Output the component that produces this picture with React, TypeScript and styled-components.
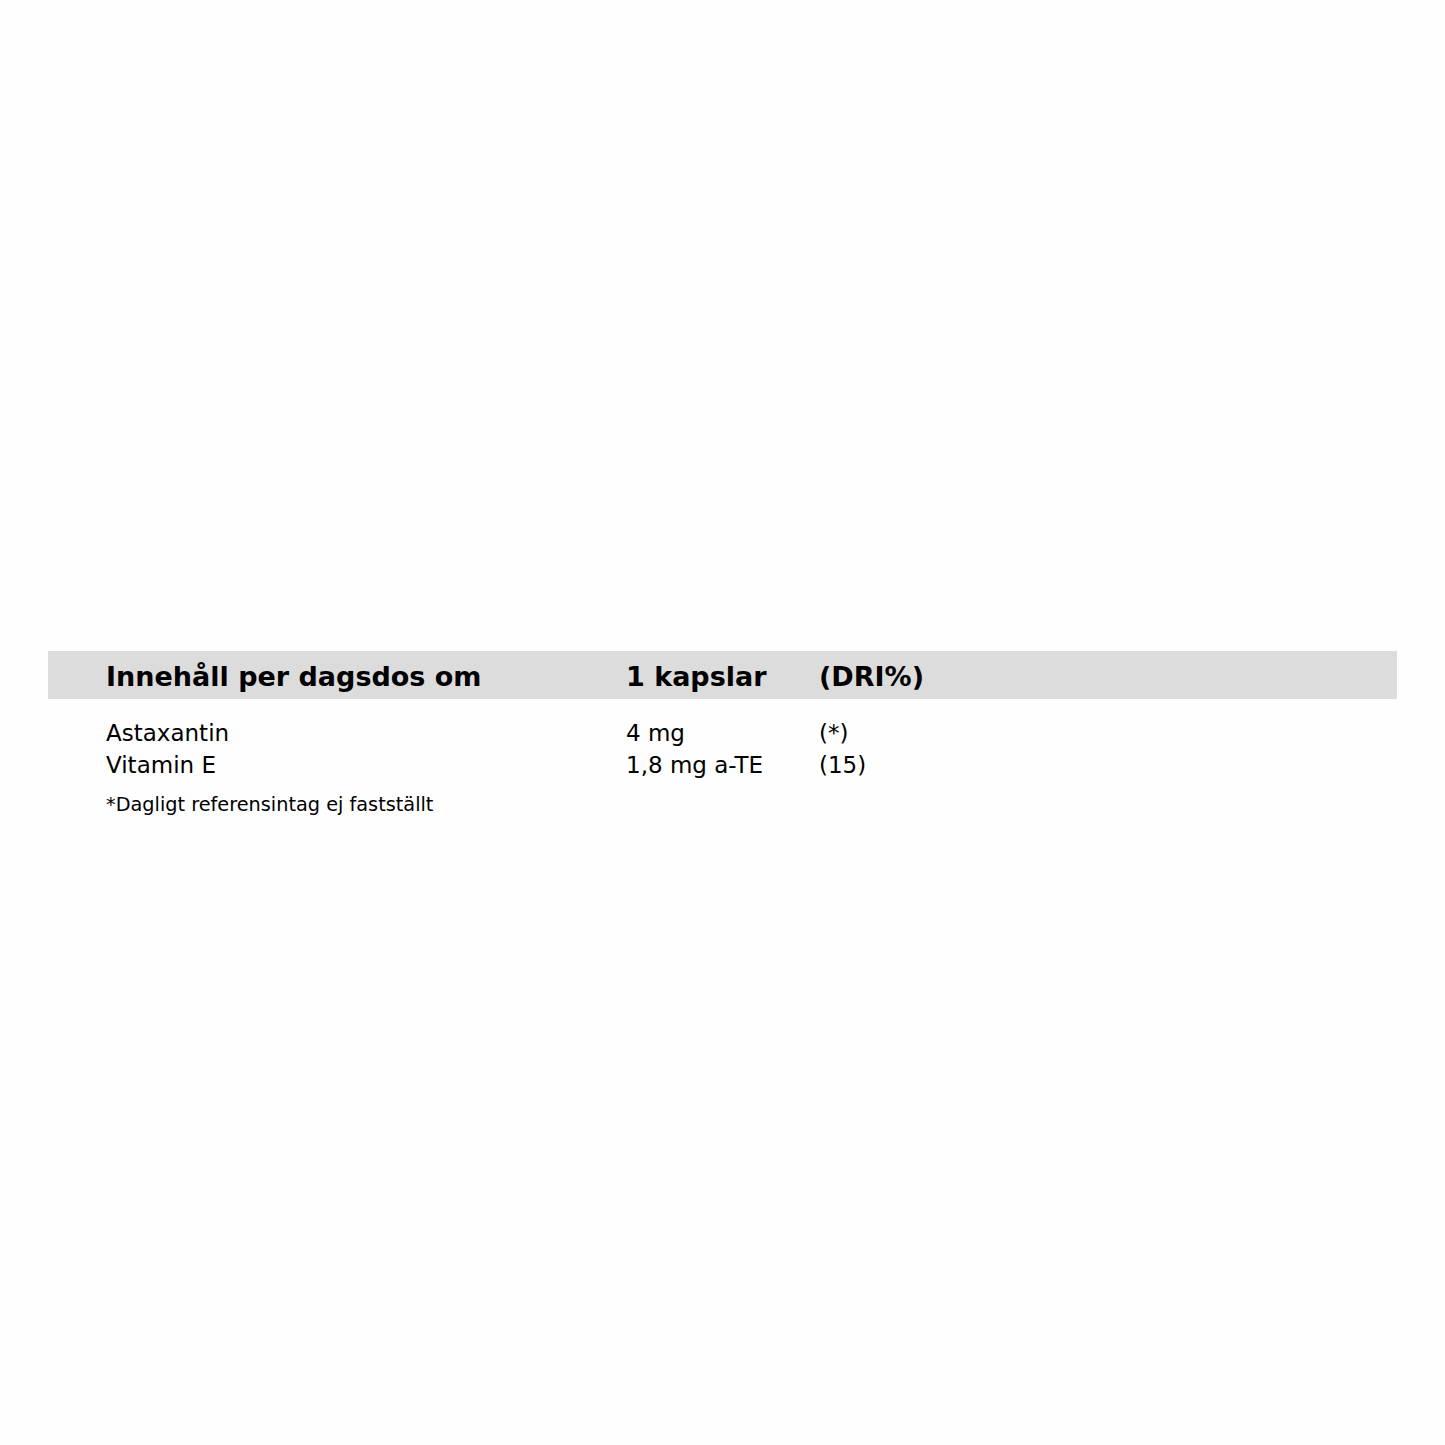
import styled, { createGlobalStyle } from "styled-components";

const GlobalStyle = createGlobalStyle`
  html, body {
    margin: 0;
    padding: 0;
    background: #fefefe;
  }
  body {
    font-family: "DejaVu Sans", "Liberation Sans", sans-serif;
    color: #000;
  }
`;

const Page = styled.div`
  width: 1445px;
  height: 1445px;
  display: flex;
  flex-direction: column;
  padding: 651px 48px 0;
  box-sizing: border-box;
`;

const Grid = styled.div`
  display: grid;
  grid-template-columns: 520px 193px 1fr;
  padding-left: 58px;
`;

const HeaderRow = styled(Grid)`
  background: #dcdcdc;
  height: 48px;
  box-sizing: border-box;
  padding-top: 3px;
  align-items: center;
  font-weight: bold;
  font-size: 27px;
`;

const Body = styled.div`
  padding-top: 18px;
`;

const Row = styled(Grid)`
  font-size: 23px;
  line-height: 32px;
`;

const Note = styled.p`
  margin: 12px 0 0 58px;
  font-size: 19.3px;
  line-height: 24px;
`;

const rows = [
  ["Astaxantin", "4 mg", "(*)"],
  ["Vitamin E", "1,8 mg a-TE", "(15)"],
];

export default function App() {
  return (
    <>
      <GlobalStyle />
      <Page>
        <HeaderRow>
          <span>Innehåll per dagsdos om</span>
          <span>1 kapslar</span>
          <span>(DRI%)</span>
        </HeaderRow>
        <Body>
          {rows.map((r) => (
            <Row key={r[0]}>
              <span>{r[0]}</span>
              <span>{r[1]}</span>
              <span>{r[2]}</span>
            </Row>
          ))}
          <Note>*Dagligt referensintag ej fastställt</Note>
        </Body>
      </Page>
    </>
  );
}
